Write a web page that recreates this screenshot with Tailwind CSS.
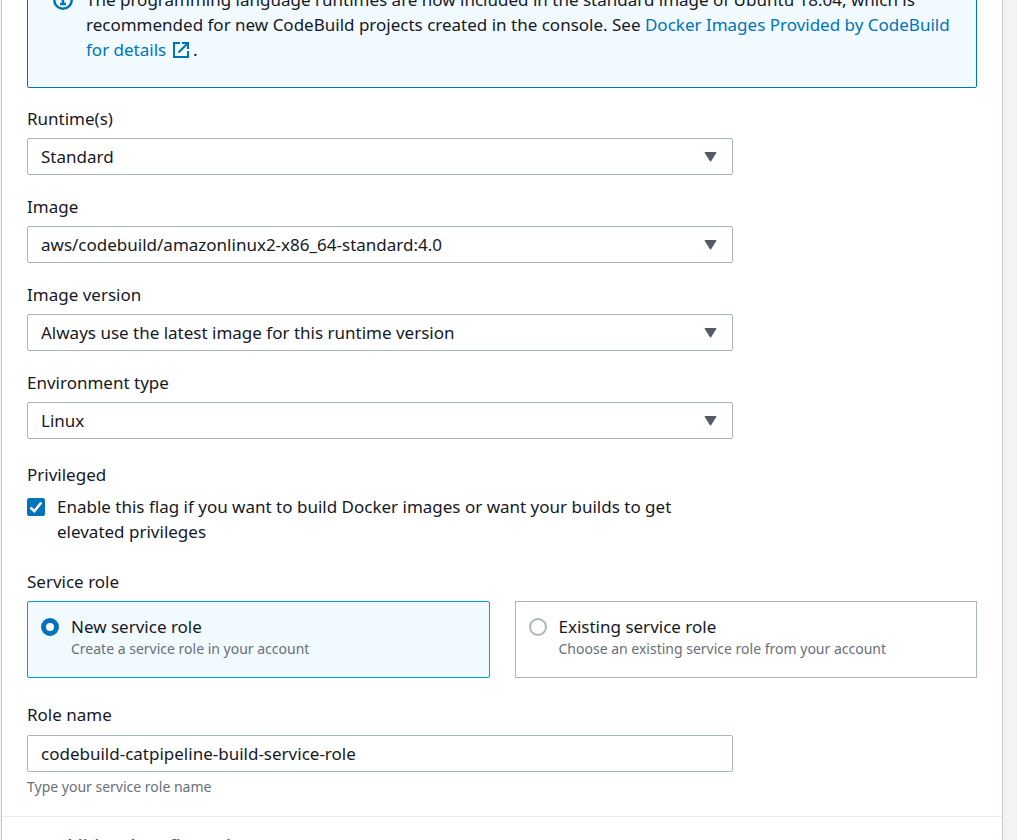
<!DOCTYPE html>
<html lang="en">
<head>
<meta charset="utf-8">
<meta name="viewport" content="width=device-width, initial-scale=1">
<title>Environment</title>
<script src="https://cdn.jsdelivr.net/npm/@tailwindcss/browser@4"></script>
</head>
<body class="h-screen overflow-hidden bg-[#f2f3f3] pl-px pr-[14px] text-[17px] leading-[25px] text-[#16191f]" style="font-family:'Noto Sans','Open Sans',sans-serif">
<main class="flow-root border-x border-[#c4cacb] bg-white">
  <div class="px-[25px] pb-[19px]">
    <section class="-mt-[33px] flex gap-[13px] rounded-[2px] border border-[#0073bb] bg-[#f1faff] pt-[19px] pr-6 pb-[25px] pl-[25px]">
      <svg class="mt-[3px] size-5 shrink-0" viewBox="0 0 20 20" fill="none" stroke="#0073bb" stroke-width="2.500"><circle cx="10" cy="10" r="8.750"/><path d="M10 4v2.500M7.500 9H10v5M7 14h6"/></svg>
      <p>The programming language runtimes are now included in the standard image of Ubuntu 18.04, which is recommended for new CodeBuild projects created in the console. See <a href="#" class="text-[#0073bb]">Docker Images Provided by CodeBuild for details <svg class="ml-0.5 inline size-4 align-[-2px]" viewBox="0 0 16 16" fill="none" stroke="currentColor" stroke-width="2"><path d="M7 1H1v14h14V9M9 1h6v6M15 1 5.500 10.500"/></svg></a> .</p>
    </section>

    <div class="mt-[18px] flex w-[706px] max-w-full flex-col gap-[19px]">
      <div class="flex flex-col gap-[7px]">
        <label for="runtime">Runtime(s)</label>
        <div class="relative"><select id="runtime" class="h-[37px] w-full appearance-none rounded-[2px] border border-[#aab7b8] bg-white px-[13px]"><option>Standard</option></select>
        <svg class="pointer-events-none absolute top-[14px] right-4 h-[10px] w-[13px]" viewBox="0 0 13 10"><path d="M1 .5h11L6.500 9.300z" fill="#545b64" stroke="#545b64" stroke-linejoin="round"/></svg></div>
      </div>
      <div class="flex flex-col gap-[7px]">
        <label for="image">Image</label>
        <div class="relative"><select id="image" class="h-[37px] w-full appearance-none rounded-[2px] border border-[#aab7b8] bg-white px-[13px]"><option>aws/codebuild/amazonlinux2-x86_64-standard:4.0</option></select>
        <svg class="pointer-events-none absolute top-[14px] right-4 h-[10px] w-[13px]" viewBox="0 0 13 10"><path d="M1 .5h11L6.500 9.300z" fill="#545b64" stroke="#545b64" stroke-linejoin="round"/></svg></div>
      </div>
      <div class="flex flex-col gap-[7px]">
        <label for="version">Image version</label>
        <div class="relative"><select id="version" class="h-[37px] w-full appearance-none rounded-[2px] border border-[#aab7b8] bg-white px-[13px]"><option>Always use the latest image for this runtime version</option></select>
        <svg class="pointer-events-none absolute top-[14px] right-4 h-[10px] w-[13px]" viewBox="0 0 13 10"><path d="M1 .5h11L6.500 9.300z" fill="#545b64" stroke="#545b64" stroke-linejoin="round"/></svg></div>
      </div>
      <div class="flex flex-col gap-[7px]">
        <label for="envtype">Environment type</label>
        <div class="relative"><select id="envtype" class="h-[37px] w-full appearance-none rounded-[2px] border border-[#aab7b8] bg-white px-[13px]"><option>Linux</option></select>
        <svg class="pointer-events-none absolute top-[14px] right-4 h-[10px] w-[13px]" viewBox="0 0 13 10"><path d="M1 .5h11L6.500 9.300z" fill="#545b64" stroke="#545b64" stroke-linejoin="round"/></svg></div>
      </div>
    </div>

    <fieldset class="mt-[23px] w-[706px] max-w-full">
      <legend class="pb-[7px]">Privileged</legend>
      <div class="flex gap-3">
        <span class="relative mt-1 size-[18px] shrink-0">
          <input id="privileged" type="checkbox" checked class="block size-[18px] appearance-none rounded-[2px] border border-[#aab7b8] checked:border-[#0073bb] checked:bg-[#0073bb]">
          <svg class="pointer-events-none absolute inset-0 size-[18px]" viewBox="0 0 18 18" fill="none" stroke="#fff" stroke-width="2.500"><path d="m3.500 9.500 3.800 3.700L14.300 4.500"/></svg>
        </span>
        <label for="privileged">Enable this flag if you want to build Docker images or want your builds to get<br>elevated privileges</label>
      </div>
    </fieldset>

    <fieldset class="mt-[25px]">
      <legend class="pb-[7px]">Service role</legend>
      <div class="grid grid-cols-2 gap-[25px]">
        <label class="flex gap-3 rounded-[2px] border border-[#00a1c9] bg-[#f1faff] px-[13px] pt-3 pb-[18px]">
          <input type="radio" name="role" checked class="mt-1 size-[18px] shrink-0 appearance-none rounded-full border-2 border-[#aab7b8] bg-white checked:border-[5px] checked:border-[#0073bb]">
          <span class="flex flex-col"><span>New service role</span><span class="text-[14px] leading-5 text-[#687078]">Create a service role in your account</span></span>
        </label>
        <label class="flex gap-3 border border-[#aab7b8] bg-white px-[13px] pt-3 pb-[18px]">
          <input type="radio" name="role" class="mt-1 size-[18px] shrink-0 appearance-none rounded-full border-2 border-[#aab7b8] bg-white checked:border-[5px] checked:border-[#0073bb]">
          <span class="flex flex-col"><span>Existing service role</span><span class="text-[14px] leading-5 text-[#687078]">Choose an existing service role from your account</span></span>
        </label>
      </div>
    </fieldset>

    <div class="mt-6 flex w-[706px] max-w-full flex-col">
      <label for="rolename">Role name</label>
      <input id="rolename" type="text" value="codebuild-catpipeline-build-service-role" aria-describedby="rolehint" class="mt-2 h-[37px] rounded-[2px] border border-[#aab7b8] bg-white px-[13px]">
      <p id="rolehint" class="mt-[5px] text-[14px] leading-5 text-[#687078]">Type your service role name</p>
    </div>
  </div>
  <div class="border-t border-[#eaeded] px-[25px] py-[17px]">
    <button type="button" class="flex items-center gap-[13px] font-semibold text-[#545b64]"><svg class="size-[10px]" viewBox="0 0 10 10"><path d="M1 0v10l8-5z" fill="#545b64"/></svg>Additional configuration</button>
  </div>
</main>
</body>
</html>
